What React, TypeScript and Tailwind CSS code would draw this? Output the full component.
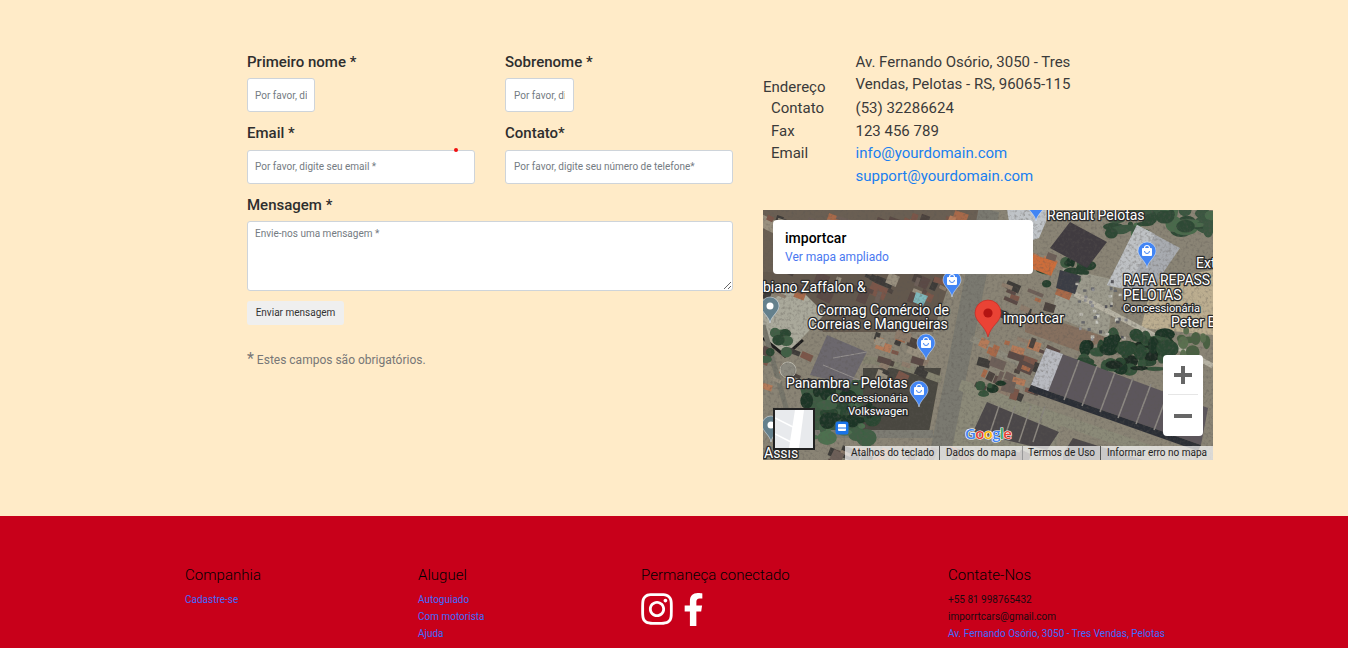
import { FaFacebookF, FaInstagram } from 'react-icons/fa'

const roboto = { fontFamily: 'Roboto, sans-serif' }

// seeded generator so the satellite picture is the same on every render
let seed = 41
function rand() {
  seed = (seed * 16807) % 2147483647
  return seed / 2147483647
}

const housePalette = ['#7b5648', '#a8694a', '#5a4a44', '#8d7c6c', '#3c3a38', '#6d5f58', '#b57a58', '#99907f', '#4b423e']

function scatter(x0: number, y0: number, x1: number, y1: number, count: number, maxSize: number, palette = housePalette) {
  const out = []
  for (let i = 0; i < count; i++) {
    out.push({
      x: x0 + rand() * (x1 - x0),
      y: y0 + rand() * (y1 - y0),
      w: 4 + rand() * maxSize,
      h: 3 + rand() * maxSize * 0.7,
      fill: palette[Math.floor(rand() * palette.length)],
      rot: 15 + rand() * 12,
    })
  }
  return out
}

const houses = [
  ...scatter(0, 0, 205, 12, 26, 16),
  ...scatter(0, 60, 178, 82, 30, 14),
  ...scatter(112, 118, 160, 165, 24, 13),
  ...scatter(222, 60, 300, 100, 14, 14),
  ...scatter(212, 125, 285, 180, 40, 13),
  ...scatter(0, 135, 40, 175, 8, 9),
  ...scatter(262, 40, 300, 60, 6, 12),
  ...scatter(60, 235, 260, 250, 22, 16),
]
const trees = [
  ...scatter(320, 122, 405, 160, 50, 14, ['#1f3526', '#2b4630', '#1a2c20', '#35523a']),
  ...scatter(340, 0, 450, 24, 34, 16, ['#3a5640', '#4a6a4c', '#2f4a36']),
  ...scatter(40, 180, 110, 228, 34, 14, ['#3f5f44', '#2b4630', '#4e7050', '#1f3526']),
  ...scatter(278, 50, 326, 75, 14, 9, ['#28402e', '#3c5a40', '#1f3526']),
  ...scatter(212, 168, 240, 186, 6, 7, ['#1f3526', '#35523a']),
  ...scatter(0, 120, 24, 150, 8, 8, ['#2b4630', '#3f5f44']),
  ...scatter(410, 120, 450, 150, 10, 10, ['#4a6042', '#5a7050']),
]
const cars = scatter(310, 70, 362, 128, 40, 2, ['#b8b6ac', '#55555a', '#8e8e92', '#c8c8c0', '#66676c'])

function Pin({ x, y, color = '#4285f4' }: { x: number; y: number; color?: string }) {
  return (
    <g transform={`translate(${x} ${y})`}>
      <path d="M0 17C-1 10-9 6-9 0a9 9 0 0 1 18 0C9 6 1 10 0 17Z" fill={color} stroke="#e8eef8" strokeWidth="0.5" />
      {color === '#4285f4' ? (
        <g>
          <rect x="-5" y="-3" width="10" height="8" rx="1" fill="#fff" />
          <path d="M-2.5-3a2.5 2.5 0 0 1 5 0" fill="none" stroke="#fff" strokeWidth="1.2" />
          <path d="M-2.5 0a2.5 2.5 0 0 0 5 0" fill="none" stroke="#4285f4" strokeWidth="1" />
        </g>
      ) : (
        <circle cx="0" cy="0" r="3.5" fill="#fff" />
      )}
    </g>
  )
}

function Label({ x, y, size = 14, children }: { x: number; y: number; size?: number; children: string }) {
  return (
    <text
      x={x}
      y={y}
      fontSize={size}
      fill="#fff"
      stroke="#2a2a2a"
      strokeWidth="2.6"
      strokeLinejoin="round"
      paintOrder="stroke"
      fontFamily="Roboto, sans-serif"
    >
      {children}
    </text>
  )
}

function SatelliteMap() {
  return (
    <svg className="absolute inset-0" width="450" height="250" viewBox="0 0 450 250">
      <defs>
        <filter id="grain" x="0" y="0" width="100%" height="100%">
          <feTurbulence type="fractalNoise" baseFrequency="0.35" numOctaves="2" seed="7" />
          <feColorMatrix values="0 0 0 0 0.1  0 0 0 0 0.09  0 0 0 0 0.08  0.7 0.7 0 0 -0.66" />
        </filter>
        <filter id="soft">
          <feGaussianBlur stdDeviation="0.6" />
        </filter>
      </defs>
      <g filter="url(#soft)">
        <rect width="450" height="250" fill="#8a8474" />
        <path d="M0 0H220L200 64H0Z" fill="#6b5f52" />
        <path d="M0 62H190L170 122H60L30 75H0Z" fill="#64594e" />
        <path d="M390 70L450 60V125L378 118Z" fill="#bcae90" />
        <path d="M262 100L345 128L318 142L262 122Z" fill="#86705f" />
        <path d="M0 100L30 72L62 104L22 146L0 128Z" fill="#aaa99b" />
        <path d="M0 128L22 146L40 130" stroke="#1c1c1c" strokeWidth="3" fill="none" />
        <path d="M35 170H110V228H50Z" fill="#3d5a42" />
        <path d="M100 158H178L166 222H100Z" fill="#4a463f" />
        <path d="M300 58L352 70L345 128L288 105Z" fill="#9c9a8c" />
        <path d="M200 170L300 205L290 250H170Z" fill="#8b8978" />
        {/* roads */}
        <path d="M226 0L176 250" stroke="#7a7970" strokeWidth="21" />
        <path d="M50 224H170" stroke="#7d7c73" strokeWidth="8" />
        <path d="M197 175L385 240" stroke="#8b8a78" strokeWidth="11" />
        <path d="M100 150Q125 150 178 170" stroke="#85836f" strokeWidth="7" fill="none" />
        <path d="M208 128L265 158" stroke="#8e8b7d" strokeWidth="6" />
        <path d="M0 115L32 230" stroke="#76756a" strokeWidth="5" />
        <path d="M312 84L450 156" stroke="#b7b3a4" strokeWidth="5" />
        {houses.map((h, i) => (
          <rect key={i} x={h.x} y={h.y} width={h.w} height={h.h} fill={h.fill} transform={`rotate(${h.rot} ${h.x} ${h.y})`} />
        ))}
        {trees.map((t, i) => (
          <ellipse key={i} cx={t.x} cy={t.y} rx={t.w / 1.6} ry={t.h / 1.4} fill={t.fill} />
        ))}
        {/* sheds */}
        <path d="M47 165L64 125L104 142L87 175Z" fill="#6c686e" />
        <path d="M70 148L104 142M60 155L96 170" stroke="#94908e" />
        <path d="M45 168L87 178L85 182L43 172Z" fill="#2a2a30" />
        <path d="M344 75L374 15L417 38L387 82Z" fill="#a8abb0" />
        <path d="M374 15L392 24L364 80L344 75Z" fill="#bec1c4" />
        <path d="M287 38L307 12L344 32L324 58Z" fill="#3f3a40" />
        <path d="M244 0H288L276 28L250 36Z" fill="#c0c4c8" />
        <path d="M268 44L294 52L288 66L262 56Z" fill="#cc6d3a" />
        <path d="M297 60L318 66L312 84L293 78Z" fill="#3b3e44" />
        <path d="M153 82L165 86L160 96L150 92Z" fill="#7fb8bc" />
        <path d="M268 175L283 138L445 198L438 235Z" fill="#5c565c" />
        <path d="M268 175L283 138L300 144L285 182Z" fill="#b8bac0" />
        <path d="M268 175L438 235L435 241L265 181Z" fill="#2c2e36" />
        {[316, 334, 352, 370, 388, 406, 424].map((x, i) => (
          <path key={x} d={`M${x} ${150 + i * 6}L${x - 15} ${190 + i * 6}`} stroke="#8c8882" strokeWidth="1.5" />
        ))}
        <path d="M224 192L210 222L284 240L296 222Z" fill="#4c474a" />
        {[236, 252, 268, 282].map((x) => (
          <path key={x} d={`M${x} 196L${x - 12} 232`} stroke="#8b877f" strokeWidth="1.5" />
        ))}
        <path d="M300 244L310 228L380 250H300Z" fill="#4c4748" />
        <circle cx="25" cy="160" r="8" fill="#8c8a80" stroke="#b8b6aa" strokeWidth="1" />
        {cars.map((c, i) => (
          <rect key={i} x={c.x} y={c.y} width={c.w / 1.6} height={c.h / 1.3} fill={c.fill} />
        ))}
      </g>
      <rect width="450" height="250" filter="url(#grain)" />

      <Pin x={273} y={-6} />
      <Pin x={384} y={41} />
      <Pin x={189} y={70} />
      <Pin x={163} y={133} />
      <Pin x={156} y={180} />
      <Pin x={7} y={96} color="#64808c" />
      <Pin x={8} y={215} color="#64808c" />
      <rect x="72.5" y="211.5" width="13" height="13" rx="2.5" fill="#1a73e8" />
      <rect x="75" y="214" width="8" height="7" rx="1" fill="#fff" />
      <path d="M75 218h8" stroke="#1a73e8" />

      <path d="M225 127C222 115 212 112 212 103a13 13 0 0 1 26 0C238 112 228 115 225 127Z" fill="#ea4335" stroke="#c5221f" strokeWidth="0.6" />
      <circle cx="225" cy="103" r="4.6" fill="#b31412" />

      <Label x={284} y={10}>Renault Pelotas</Label>
      <Label x={0} y={82}>biano Zaffalon &amp;</Label>
      <Label x={54} y={105}>Cormag Comércio de</Label>
      <Label x={45} y={119}>Correias e Mangueiras</Label>
      <Label x={240} y={113}>importcar</Label>
      <Label x={360} y={75}>RAFA REPASS</Label>
      <Label x={360} y={90}>PELOTAS</Label>
      <Label x={360} y={102} size={11.2}>Concessionária</Label>
      <Label x={408} y={117}>Peter B</Label>
      <Label x={433} y={58}>Ext</Label>
      <Label x={23} y={178}>Panambra - Pelotas</Label>
      <Label x={68} y={192} size={11.2}>Concessionária</Label>
      <Label x={85} y={205} size={11.2}>Volkswagen</Label>
      <Label x={1} y={248}>Assis</Label>

      <text
        x="202"
        y="229"
        fontSize="15"
        fontWeight={600}
        fontFamily="'Open Sans', sans-serif"
        stroke="#fff"
        strokeWidth="1.2"
        paintOrder="stroke"
        letterSpacing="-0.7"
      >
        <tspan fill="#4285f4">G</tspan>
        <tspan fill="#ea4335">o</tspan>
        <tspan fill="#fbbc05">o</tspan>
        <tspan fill="#4285f4">g</tspan>
        <tspan fill="#34a853">l</tspan>
        <tspan fill="#ea4335">e</tspan>
      </text>
    </svg>
  )
}

function MapEmbed() {
  return (
    <div className="relative mt-[22px] h-[250px] w-[450px] overflow-hidden" style={roboto}>
      <SatelliteMap />
      <div className="absolute left-[10px] top-[10px] h-[54px] w-[260px] rounded-sm bg-white pl-3 pt-[10px]">
        <div className="text-sm leading-[16px] font-medium text-black">importcar</div>
        <div className="mt-[4px] text-xs leading-[14px] text-[#4a78f0]">Ver mapa ampliado</div>
      </div>
      <div className="absolute left-[400px] top-[145px] flex h-[81px] w-[40px] flex-col items-center rounded-sm bg-white">
        <svg className="mt-[11px]" width="18" height="18" viewBox="0 0 18 18">
          <path d="M0 9h18M9 0v18" stroke="#666" strokeWidth="4" />
        </svg>
        <div className="mt-[10px] h-px w-[30px] bg-[#e6e6e6]" />
        <svg className="mt-[12px]" width="18" height="18" viewBox="0 0 18 18">
          <path d="M0 9h18" stroke="#666" strokeWidth="4" />
        </svg>
      </div>
      <div className="absolute left-[10px] top-[198px] h-[42px] w-[42px] overflow-hidden border-2 border-[#222] bg-[#e8eaed]">
        <svg width="38" height="38" viewBox="0 0 38 38">
          <path d="M20 0L14 38H24L29 0Z" fill="#fff" />
          <path d="M0 8L20 18M0 24L16 32" stroke="#fff" strokeWidth="1.5" />
        </svg>
      </div>
      <div className="absolute bottom-0 right-0 flex h-[14px] w-[368px] items-center bg-white/70 pl-[6px] text-[10px] leading-[14px] text-[#222]">
        <span className="w-[89px] border-r border-[#555]">Atalhos do teclado</span>
        <span className="w-[83px] border-r border-[#999] pl-[6px]">Dados do mapa</span>
        <span className="w-[78px] border-r border-[#555] pl-[5px]">Termos de Uso</span>
        <span className="pl-[6px]">Informar erro no mapa</span>
      </div>
    </div>
  )
}

function Field({
  label,
  placeholder,
  className,
}: {
  label: string
  placeholder: string
  className: string
}) {
  return (
    <div>
      <label className="block text-[15px] leading-[22px] font-medium text-[#2e2e2e]">{label}</label>
      <input
        placeholder={placeholder}
        className={`block h-[34px] rounded-[3px] border border-[#ced4da] bg-white text-[10px] text-[#495057] outline-none placeholder:text-[#747b82] ${className}`}
      />
    </div>
  )
}

function ContactForm() {
  return (
    <form className="w-[486px] pt-px">
      <div className="grid grid-cols-2 gap-x-[30px] gap-y-[10px]">
        <Field label="Primeiro nome *" placeholder="Por favor, digite seu nome *" className="mt-[5px] w-[68px] px-[7px]" />
        <Field label="Sobrenome *" placeholder="Por favor, digite seu sobrenome *" className="mt-[5px] w-[69px] px-2" />
        <div className="relative">
          <Field label="Email *" placeholder="Por favor, digite seu email *" className="mt-[6px] w-[228px] px-[7px] pb-[2px]" />
          <span className="absolute left-[207px] top-[26px] h-1 w-1 rounded-full bg-[#f01010]" />
        </div>
        <Field label="Contato*" placeholder="Por favor, digite seu número de telefone*" className="mt-[6px] w-[228px] px-2 pb-[2px]" />
      </div>
      <label className="mt-[10px] block text-[15px] leading-[22px] font-medium text-[#2e2e2e]">Mensagem *</label>
      <textarea
        placeholder="Envie-nos uma mensagem *"
        className="mt-[5px] block h-[70px] w-[486px] rounded-[3px] border border-[#ced4da] bg-white px-[7px] py-[5px] text-[10px] leading-[14px] outline-none placeholder:text-[#747b82]"
      />
      <button type="button" className="mt-[10px] block h-6 w-[97px] rounded-[3px] bg-[#efefef] pb-[2px] text-[10px] text-[#333]">
        Enviar mensagem
      </button>
      <p className="mt-6 text-xs leading-[22px] text-[#777]">
        <span className="text-base leading-none">*</span> Estes campos são obrigatórios.
      </p>
    </form>
  )
}

function ContactInfo() {
  return (
    <div className="w-[450px]">
      <div className="grid grid-cols-[92.5px_1fr] text-[15px] leading-[23px] text-[#3a3a3a]">
        <div className="-mb-[2px] self-end">Endereço</div>
        <div className="mb-[2px] w-[225px] pt-px leading-[22px]">Av. Fernando Osório, 3050 - Tres Vendas, Pelotas - RS, 96065-115</div>
        <div className="pl-2">Contato</div>
        <div>(53) 32286624</div>
        <div className="pl-2">Fax</div>
        <div>123 456 789</div>
        <div className="-mt-px pl-2">Email</div>
        <div className="-mt-px text-[#1a7ff0]">info@yourdomain.com</div>
        <div />
        <div className="text-[#1a7ff0]">support@yourdomain.com</div>
      </div>
      <MapEmbed />
    </div>
  )
}

function FooterTitle({ children }: { children: string }) {
  return <h4 className="text-[15px] leading-[18px] font-light tracking-[0.03px] text-black">{children}</h4>
}

function FooterLink({ children }: { children: string }) {
  return <a className="block text-[10px] leading-[17px] text-[#3d6bff]">{children}</a>
}

export default function App() {
  return (
    <div className="h-[648px] overflow-hidden" style={roboto}>
      <section className="flex h-[516px] gap-[30px] bg-[#ffebc8] pl-[247px] pt-[50px]">
        <ContactForm />
        <ContactInfo />
      </section>
      <footer className="flex h-[132px] bg-[#c8001a] pl-[185px] pt-[50px]">
        <div className="w-[233px]">
          <FooterTitle>Companhia</FooterTitle>
          <div className="mt-[7px]">
            <FooterLink>Cadastre-se</FooterLink>
          </div>
        </div>
        <div className="w-[223px]">
          <FooterTitle>Aluguel</FooterTitle>
          <div className="mt-[7px]">
            <FooterLink>Autoguiado</FooterLink>
            <FooterLink>Com motorista</FooterLink>
            <FooterLink>Ajuda</FooterLink>
          </div>
        </div>
        <div className="w-[307px]">
          <FooterTitle>Permaneça conectado</FooterTitle>
          <div className="mt-[7px] flex items-center gap-[10px] text-white">
            <FaInstagram className="h-[36px] w-[32px]" />
            <FaFacebookF className="h-[33px] w-[21px]" />
          </div>
        </div>
        <div>
          <FooterTitle>Contate-Nos</FooterTitle>
          <div className="mt-[7px] text-[10px] leading-[17px] text-[#1a0a10]">
            <div>+55 81 998765432</div>
            <div>imporrtcars@gmail.com</div>
          </div>
          <FooterLink>Av. Fernando Osório, 3050 - Tres Vendas, Pelotas</FooterLink>
        </div>
      </footer>
    </div>
  )
}
